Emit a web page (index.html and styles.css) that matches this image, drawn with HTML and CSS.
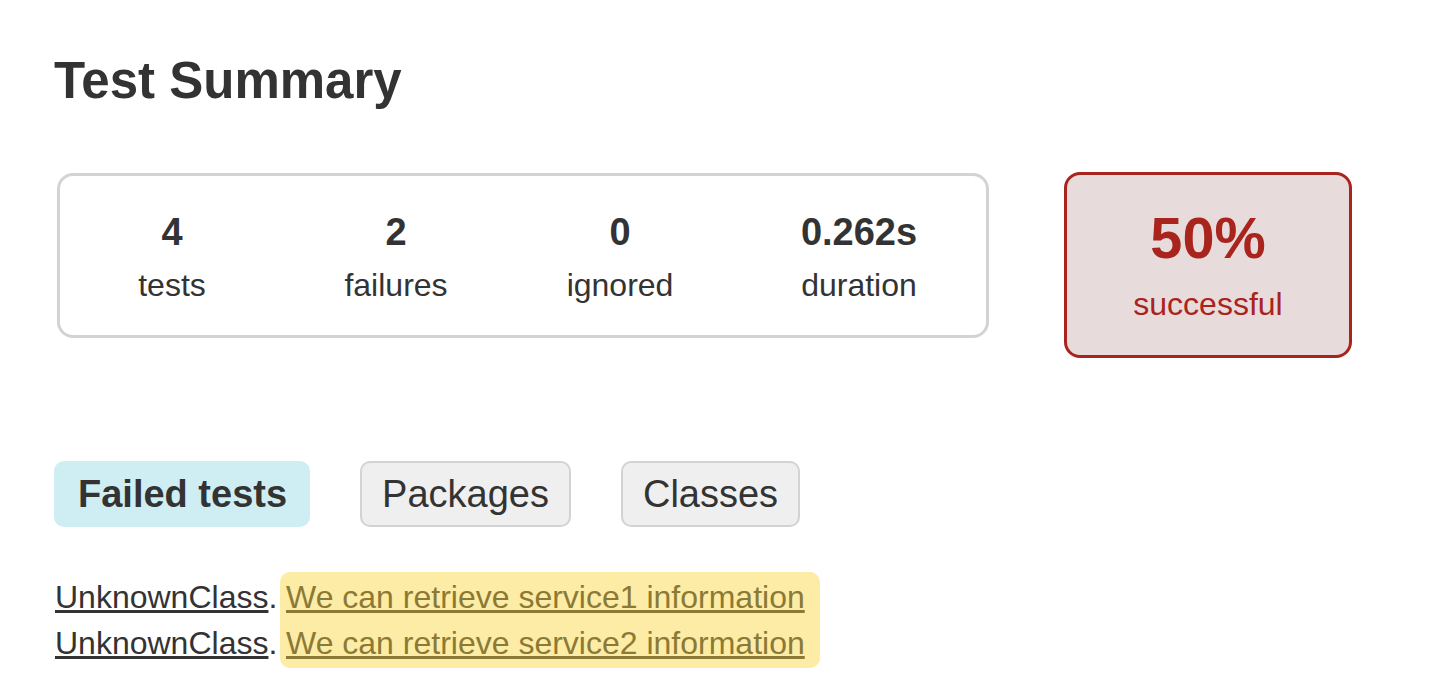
FILE: index.html
```html
<!DOCTYPE html>
<html lang="en">
<head>
<meta charset="utf-8">
<title>Test results - Test Summary</title>
<link rel="stylesheet" href="styles.css">
</head>
<body>
<div class="content">
  <h1 class="title">Test Summary</h1>
  <div class="summary">
    <div class="summary-group">
      <div class="info-box">
        <div class="counter">4</div>
        <p class="label">tests</p>
      </div>
      <div class="info-box">
        <div class="counter">2</div>
        <p class="label">failures</p>
      </div>
      <div class="info-box">
        <div class="counter">0</div>
        <p class="label">ignored</p>
      </div>
      <div class="info-box info-box-wide">
        <div class="counter">0.262s</div>
        <p class="label">duration</p>
      </div>
    </div>
    <div class="success-rate failures">
      <div class="percent">50%</div>
      <p class="label">successful</p>
    </div>
  </div>
  <ul class="tab-links">
    <li class="tab tab-selected">Failed tests</li>
    <li class="tab">Packages</li>
    <li class="tab">Classes</li>
  </ul>
  <div class="failed-list">
    <div class="class-col">
      <div class="row"><a href="#" class="class-link">UnknownClass</a>.</div>
      <div class="row"><a href="#" class="class-link">UnknownClass</a>.</div>
    </div>
    <div class="test-col">
      <div class="row"><a href="#" class="test-link">We can retrieve service1 information</a></div>
      <div class="row"><a href="#" class="test-link">We can retrieve service2 information</a></div>
    </div>
  </div>
</div>
</body>
</html>
```

FILE: styles.css
```css
* { box-sizing: border-box; }
html, body {
  margin: 0;
  padding: 0;
  background: #ffffff;
  color: #333333;
  font-family: "Liberation Sans", Arial, Helvetica, sans-serif;
  font-size: 32px;
}
.content {
  padding: 51px 0 0 54px;
}
.title {
  margin: 0;
  font-size: 51px;
  line-height: 60px;
  font-weight: bold;
  color: #333333;
}
.summary {
  display: flex;
  align-items: flex-start;
  margin-top: 61px;
}
.summary-group {
  display: flex;
  margin-left: 3px;
  margin-top: 1px;
  width: 932px;
  border: 3px solid #d3d3d3;
  border-radius: 16px;
}
.info-box {
  width: 224px;
  padding: 34px 0 30px;
  text-align: center;
}
.info-box-wide { width: 254px; }
.counter {
  font-size: 38px;
  font-weight: bold;
  line-height: 44px;
}
.label {
  margin: 11px 0 0;
  font-size: 32px;
  line-height: 40px;
}
.success-rate {
  width: 288px;
  margin-left: 75px;
  padding: 30px 0 31px;
  border: 3px solid #a8241c;
  border-radius: 16px;
  background: #e8dbdb;
  color: #a8241c;
  text-align: center;
}
.percent {
  font-size: 57.6px;
  font-weight: bold;
  line-height: 66px;
}
.success-rate .label { margin-top: 13px; }
.tab-links {
  display: flex;
  gap: 50px;
  list-style: none;
  margin: 103px 0 0;
  padding: 0;
}
.tab {
  padding: 0 20px;
  border: 2px solid #d3d3d3;
  border-radius: 10px;
  background: #efefef;
  font-size: 38px;
  line-height: 62px;
  color: #333333;
}
.tab-selected {
  padding: 0 21px 0 22px;
  background: #cfeef3;
  border-color: #cfeef3;
  font-weight: bold;
}
.failed-list {
  display: flex;
  align-items: flex-start;
  margin-top: 45px;
}
.class-col {
  width: 226px;
  padding-top: 2px;
  padding-left: 1px;
}
.test-col {
  padding: 2px 15px 2px 6px;
  background: #fdeca5;
  border-radius: 10px;
}
.row {
  font-size: 32px;
  line-height: 46px;
  white-space: nowrap;
}
.class-link {
  color: #333333;
  text-decoration: underline;
}
.test-link {
  color: #8b7a35;
  text-decoration: underline;
}
```
